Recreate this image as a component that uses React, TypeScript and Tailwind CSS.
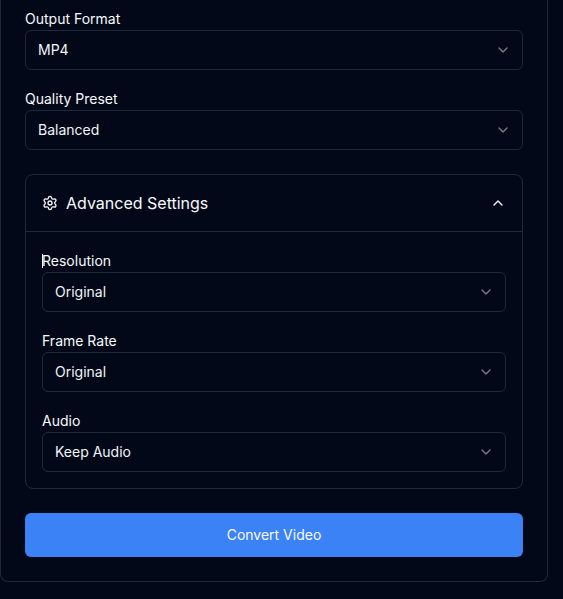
import { ChevronDown, ChevronUp, Settings } from 'lucide-react';

function SelectField({ label, value, caret }: { label: string; value: string; caret?: boolean }) {
  return (
    <div className="flex flex-col gap-1">
      <label className="relative text-sm leading-none font-normal text-[#f8fafc]">
        {caret && <span className="absolute left-0 top-0 h-[14px] w-px bg-[#f8fafc]" />}
        {label}
      </label>
      <button className="flex h-10 w-full items-center justify-between rounded-md border border-[#1e293b] bg-[#020817] pl-3 pr-[11px] text-sm font-normal text-[#f1f5f9]">
        <span>{value}</span>
        <ChevronDown className="h-4 w-4 opacity-50" />
      </button>
    </div>
  );
}

export default function App() {
  return (
    <div className="min-h-[599px] w-[563px] overflow-hidden bg-[#020817] font-['Inter',sans-serif]">
      <div className="flex w-[548px] flex-col gap-6 rounded-b-lg border-x border-b border-[#1e293b] px-6 pt-3 pb-6">
        <div className="flex flex-col gap-[22px]">
          <SelectField label="Output Format" value="MP4" />
          <SelectField label="Quality Preset" value="Balanced" />
        </div>

        {/* Advanced Settings */}
        <div className="rounded-lg border border-[#1e293b]">
          <div className="flex h-[57px] items-center justify-between border-b border-[#1e293b] px-4">
            <div className="flex items-center gap-2 text-base font-normal text-[#f8fafc]">
              <Settings className="h-4 w-4" />
              <span>Advanced Settings</span>
            </div>
            <ChevronUp className="h-4 w-4 text-[#f8fafc]" />
          </div>
          <div className="flex flex-col gap-[22px] px-4 pt-[22px] pb-4">
            <SelectField label="Resolution" value="Original" caret />
            <SelectField label="Frame Rate" value="Original" />
            <SelectField label="Audio" value="Keep Audio" />
          </div>
        </div>

        <button className="h-11 rounded-md bg-[#3b82f6] text-sm font-normal text-[#f8fafc]">Convert Video</button>
      </div>
    </div>
  );
}
